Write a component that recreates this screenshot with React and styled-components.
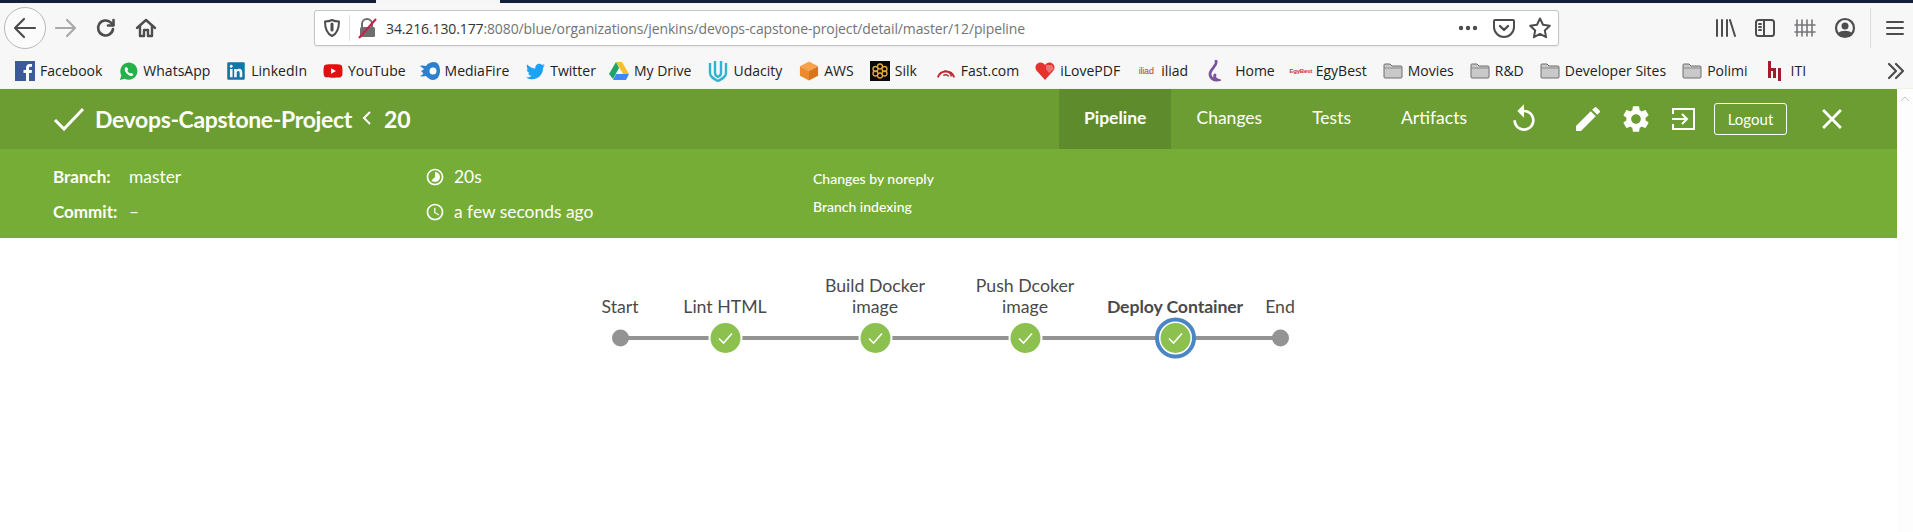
import React from "react";
import styled, { createGlobalStyle } from "styled-components";
import { FaTwitter, FaLinkedin, FaYoutube } from "react-icons/fa";
import { MdReplay, MdEdit, MdSettings, MdClose, MdTimelapse, MdAccessTime } from "react-icons/md";

const GlobalStyle = createGlobalStyle`
  html, body {
    margin: 0;
    padding: 0;
    height: 100%;
    background: #fff;
    overflow: hidden;
  }
  #root {
    height: 100%;
  }
`;

const Window = styled.div`
  width: 1913px;
  height: 532px;
  display: flex;
  flex-direction: column;
  overflow: hidden;
`;

const TabStrip = styled.div`
  height: 3px;
  flex: none;
  display: flex;
  background: #14203a;
`;

const TabGap = styled.div`
  width: 124px;
  margin-left: 376px;
  background: #f5f6f7;
`;

const NavBar = styled.div`
  height: 49px;
  flex: none;
  display: flex;
  align-items: center;
  padding-left: 4px;
  background: #f7f7f8;
  color: #4d4d4f;
`;

const BackButton = styled.div`
  width: 40px;
  height: 40px;
  flex: none;
  display: flex;
  align-items: center;
  justify-content: center;
  border: 1px solid #b9b9bb;
  border-radius: 50%;
  background: #fbfbfb;
`;

const NavButton = styled.div`
  width: ${(p) => p.$w || 40}px;
  height: 36px;
  flex: none;
  box-sizing: border-box;
  padding-left: ${(p) => p.$pl || 0}px;
  display: flex;
  align-items: center;
  justify-content: center;
  color: ${(p) => p.$color || "#4d4d4f"};
`;

const AddressBar = styled.div`
  width: 1245px;
  height: 36px;
  flex: none;
  box-sizing: border-box;
  margin-left: 148px;
  display: flex;
  align-items: center;
  border: 1px solid #c4c4c6;
  border-radius: 3px;
  background: #fff;
  box-shadow: 0 1px 2px rgba(0, 0, 0, 0.06);
`;

const ShieldSlot = styled.div`
  width: 34px;
  height: 26px;
  flex: none;
  display: flex;
  align-items: center;
  justify-content: center;
  border-right: 1px solid #e2e2e3;
`;

const LockSlot = styled.div`
  width: 36px;
  flex: none;
  display: flex;
  align-items: center;
  justify-content: center;
`;

const Url = styled.div`
  flex: 1;
  font: 14px/20px "Open Sans", sans-serif;
  letter-spacing: -0.12px;
  color: #737373;
  white-space: nowrap;
  margin-top: 2px;
  span {
    color: #333;
  }
`;

const RightTools = styled.div`
  margin-left: auto;
  display: flex;
  align-items: center;
`;

const ToolSeparator = styled.div`
  width: 1px;
  height: 40px;
  background: #dcdcde;
  margin-left: 5px;
`;

const BookmarkBar = styled.div`
  height: 36px;
  flex: none;
  box-sizing: border-box;
  padding: 2px 0 0 15px;
  display: flex;
  align-items: center;
  background: #f7f7f8;
  position: relative;
`;

const Bookmark = styled.div`
  display: flex;
  align-items: center;
  gap: ${(p) => p.$gap || 5}px;
  margin-right: ${(p) => p.$mr || 16}px;
  font: 14px/20px "Open Sans", sans-serif;
  color: #222;
  white-space: nowrap;
`;

const IconBox = styled.div`
  width: 20px;
  height: 20px;
  flex: none;
  display: flex;
  align-items: center;
  justify-content: center;
  color: ${(p) => p.$color || "inherit"};
`;

const TinyLogo = styled.span`
  font: ${(p) => p.$weight || 700} ${(p) => p.$size || 6}px/20px "Liberation Sans", sans-serif;
  color: ${(p) => p.$color};
  letter-spacing: -0.2px;
`;

const OverflowButton = styled.div`
  position: absolute;
  right: 6px;
  top: 8px;
  color: #4d4d4f;
  display: flex;
`;

const Page = styled.div`
  flex: 1;
  display: flex;
  min-height: 0;
  border-top: 1px solid #eef3e8;
`;

const Content = styled.div`
  width: 1897px;
  flex: none;
  display: flex;
  flex-direction: column;
  background: #fff;
`;

const Scrollbar = styled.div`
  flex: 1;
  display: flex;
  justify-content: center;
  padding-top: 7px;
  background: #fdfdfd;
`;

const TitleBar = styled.header`
  height: 60px;
  flex: none;
  display: flex;
  align-items: stretch;
  padding-left: 53px;
  background: #6c9d32;
  color: #fff;
  font-family: Lato, sans-serif;
`;

const TitleBlock = styled.div`
  display: flex;
  align-items: center;
`;

const ProjectName = styled.h1`
  margin: 0 0 0 10px;
  font: 700 23px/30px Lato, sans-serif;
  letter-spacing: -0.35px;
`;

const ChevronSlot = styled.span`
  display: flex;
  margin: -3px 12px 0 10px;
`;

const RunId = styled.span`
  font: 700 23px/30px Lato, sans-serif;
`;

const Tabs = styled.nav`
  margin-left: auto;
  display: flex;
`;

const Tab = styled.div`
  display: flex;
  align-items: center;
  padding: 0 25px 3px;
  font: ${(p) => (p.$active ? 700 : 400)} 17.5px/24px Lato, sans-serif;
  background: ${(p) => (p.$active ? "#5e8c2c" : "transparent")};
`;

const Actions = styled.div`
  display: flex;
  align-items: center;
  padding-right: 41px;
`;

const ActionIcon = styled.div`
  width: 48px;
  height: 48px;
  display: flex;
  align-items: center;
  justify-content: center;
  margin-left: ${(p) => p.$ml || 0}px;
`;

const LogoutButton = styled.div`
  width: 71px;
  height: 30px;
  margin-left: 6px;
  display: flex;
  align-items: center;
  justify-content: center;
  border: 1px solid #fff;
  border-radius: 3px;
  font: 400 15px/20px Lato, sans-serif;
`;

const InfoBand = styled.section`
  height: 89px;
  flex: none;
  display: flex;
  padding: 10px 0 0 53px;
  box-sizing: border-box;
  background: #76ad36;
  color: #fff;
  font-family: Lato, sans-serif;
`;

const InfoColumn = styled.div`
  width: ${(p) => p.$w}px;
  flex: none;
`;

const InfoRow = styled.div`
  height: 35px;
  display: flex;
  align-items: center;
  font-size: 17.4px;
  line-height: 22px;
`;

const InfoLabel = styled.span`
  width: 76px;
  font-weight: 700;
  font-size: 17px;
`;

const InfoGlyph = styled.span`
  width: 29px;
  display: flex;
`;

const CauseColumn = styled.div`
  padding-top: 6px;
`;

const CauseRow = styled.div`
  height: 28px;
  display: flex;
  align-items: center;
  font: 500 14px/18px Lato, sans-serif;
`;

const GraphCanvas = styled.div`
  position: relative;
  width: 762px;
  height: 110px;
  margin: 32px auto 0;
`;

const GraphSvg = styled.svg`
  position: absolute;
  left: 0;
  top: 0;
`;

const StageLabel = styled.div`
  position: absolute;
  left: ${(p) => p.$x}px;
  bottom: 63px;
  transform: translateX(-50%);
  text-align: center;
  white-space: pre-line;
  width: 160px;
  font: ${(p) => (p.$selected ? 700 : 400)} 17.7px/21px Lato, sans-serif;
  letter-spacing: ${(p) => (p.$selected ? "-0.1px" : "0")};
  color: #4a4a4a;
`;

const Ff = ({ w = 22, h = 22, vb = "0 0 22 22", sw = 2, children }) => (
  <svg width={w} height={h} viewBox={vb} fill="none" stroke="currentColor" strokeWidth={sw} strokeLinecap="round" strokeLinejoin="round">
    {children}
  </svg>
);

const BackIcon = () => (
  <Ff w={26} h={26} vb="0 0 26 26" sw={2.2}>
    <path d="M23 13H3M12 4l-9 9 9 9" />
  </Ff>
);
const ForwardIcon = () => (
  <Ff w={24} h={24} vb="0 0 24 24" sw={2.2}>
    <path d="M2 12h19M13 4l8 8-8 8" />
  </Ff>
);
const ReloadIcon = () => (
  <Ff sw={2.6}>
    <path d="M18 12a7.500 7.500 0 1 1-2.400-6.600L18 8" />
    <path d="M18.500 3v5.500H13" />
  </Ff>
);
const HomeIcon = () => (
  <Ff sw={2.4}>
    <path d="M2 11 11 3l9 8" />
    <path d="M5 9v10h4v-6h4v6h4V9" />
  </Ff>
);
const ShieldIcon = () => (
  <Ff w={20} h={20} vb="0 0 20 20" sw={2}>
    <path d="M10 2c2 1 4 1.400 7 1.500 0 7-1.500 12-7 14.500C4.500 15.500 3 10.500 3 3.500 6 3.400 8 3 10 2z" />
    <path d="M10 6v6" strokeWidth={3} />
  </Ff>
);
const LockOffIcon = () => (
  <svg width="20" height="22" viewBox="0 0 20 22">
    <path d="M4 10V7a5 5 0 0 1 10 0v3" fill="none" stroke="#6e6e6e" strokeWidth="2" />
    <rect x="2" y="10" width="15" height="10" rx="1.500" fill="#6e6e6e" />
    <path d="M1 21 18 2" stroke="#c5224b" strokeWidth="2.200" />
  </svg>
);
const PocketIcon = () => (
  <Ff w={24} h={24} vb="0 0 24 24">
    <path d="M3 4h18a1 1 0 0 1 1 1v6a10 10 0 0 1-20 0V5a1 1 0 0 1 1-1z" />
    <path d="M8 10l4 4 4-4" strokeWidth={2.4} />
  </Ff>
);
const StarIcon = () => (
  <Ff w={24} h={24} vb="0 0 24 24">
    <path d="M12 2.500l3 6.300 6.800.9-5 4.700 1.300 6.800-6.100-3.300-6.100 3.300 1.300-6.800-5-4.700 6.800-.9z" />
  </Ff>
);
const LibraryIcon = () => (
  <Ff>
    <path d="M3 3v16M8 3v16M13 3v16M16 3l5 16" />
  </Ff>
);
const SidebarIcon = () => (
  <Ff>
    <rect x="2" y="3" width="18" height="16" rx="2.500" />
    <path d="M10 3v16M5 7h2M5 10h2M5 13h2" />
  </Ff>
);
const FenceIcon = () => (
  <Ff sw={1.6}>
    <path d="M3 3v16M8 3v16M13 3v16M18 3v16M1 8h20M1 15h20" stroke="#77777a" />
  </Ff>
);
const AccountIcon = () => (
  <svg width="22" height="22" viewBox="0 0 22 22">
    <circle cx="11" cy="11" r="9" fill="none" stroke="#4d4d4f" strokeWidth="2.200" />
    <circle cx="11" cy="9" r="3.500" fill="#4d4d4f" />
    <path d="M4.500 16c2-3 11-3 13 0l-3 3h-7z" fill="#4d4d4f" />
  </svg>
);
const MenuIcon = () => (
  <Ff>
    <path d="M3 5h16M3 11h16M3 17h16" />
  </Ff>
);
const DotsIcon = () => (
  <svg width="20" height="6" viewBox="0 0 20 6" fill="currentColor">
    <circle cx="3" cy="3" r="2.200" />
    <circle cx="10" cy="3" r="2.200" />
    <circle cx="17" cy="3" r="2.200" />
  </svg>
);

const FacebookIcon = () => (
  <svg width="20" height="20" viewBox="0 0 20 20">
    <rect width="20" height="20" fill="#3b5a9a" />
    <path d="M14 20v-8h2.600l.4-3h-3V7.300c0-1 .3-1.500 1.500-1.500H17V3.100C16.600 3 15.700 3 14.800 3 12.500 3 11 4.300 11 6.900V9H8.500v3H11v8z" fill="#fff" />
  </svg>
);
const WhatsAppIcon = () => (
  <svg width="19" height="19" viewBox="0 0 20 20">
    <path d="M1 19l1.500-5A9 9 0 1 1 6 17.500z" fill="#25b14a" />
    <path d="M7 5.500c-1.500 1-1.500 3.500.7 6.200s5 3.800 6.600 2.800l.7-1.700-2.300-1.600-1.100.8c-1.200-.5-2.300-1.700-2.800-3l.9-1.100L8.400 5.500z" fill="#fff" />
  </svg>
);
const MediaFireIcon = () => (
  <svg width="20" height="18" viewBox="0 0 20 18">
    <path d="M0 4c3-1 4 0 6 0 2-3 5-4 8-4 4 0 6 4 6 9s-3 9-7 9c-3 0-5-2-7-4-2 0-4 1-6 0 2-1 4-2 3-3L1 9c1-1 3-1 3-2z" fill="#2d7fd0" />
    <circle cx="13" cy="9" r="3.500" fill="#fff" />
  </svg>
);
const DriveIcon = () => (
  <svg width="20" height="18" viewBox="0 0 20 18">
    <path d="M7 0h6l7 12h-6z" fill="#f5c02e" />
    <path d="M7 0l3 6-6 11-4-5z" fill="#1fa463" />
    <path d="M4 18l3-6h13l-3 6z" fill="#4285f4" />
  </svg>
);
const UdacityIcon = () => (
  <svg width="20" height="22" viewBox="0 0 20 22" fill="none" stroke="#2fb4d0" strokeWidth="2.400">
    <path d="M2 3v10c0 4 4 6 8 8 4-2 8-4 8-8V3" />
    <path d="M7 1v12c0 2 1 3 3 4 2-1 3-2 3-4V1" />
  </svg>
);
const AwsIcon = () => (
  <svg width="21" height="22" viewBox="0 0 21 22">
    <path d="M10.500 1 20 6 10.500 11 1 6z" fill="#f7a14a" />
    <path d="M1 6l9.500 5v10L1 16z" fill="#ec8a2c" />
    <path d="M20 6l-9.500 5v10L20 16z" fill="#d9761d" />
  </svg>
);
const SilkIcon = () => (
  <svg width="20" height="20" viewBox="0 0 20 20">
    <rect width="20" height="20" fill="#0a0a0a" />
    <g fill="none" stroke="#e2a63a" strokeWidth="1.300">
      <circle cx="10" cy="5.500" r="2.500" />
      <circle cx="10" cy="14.500" r="2.500" />
      <circle cx="5.500" cy="8" r="2.500" />
      <circle cx="14.500" cy="8" r="2.500" />
      <circle cx="5.500" cy="12.500" r="2.500" />
      <circle cx="14.500" cy="12.500" r="2.500" />
    </g>
  </svg>
);
const FastIcon = () => (
  <svg width="22" height="16" viewBox="0 0 22 16" fill="none" stroke="#c8232c" strokeWidth="2">
    <path d="M2 15a9.500 9.500 0 0 1 18 0" />
    <path d="M8 13a4 4 0 0 1 6 1M9 8a8 8 0 0 1 8 6" strokeWidth="1.600" stroke="#a33" />
  </svg>
);
const HeartIcon = () => (
  <svg width="20" height="20" viewBox="0 0 20 20">
    <path d="M10 19 1.500 9.500C-1 6 1.500 1.500 5.500 1.500 7.500 1.500 9 2.500 10 4c1-1.500 2.500-2.500 4.500-2.500 4 0 6.500 4.500 4 8z" fill="#e5322d" />
    <path d="M11 4h6l2 4-5 4-3-4z" fill="#f2f2f2" opacity="0.350" />
  </svg>
);
const HomeSwirlIcon = () => (
  <svg width="14" height="22" viewBox="0 0 14 22" fill="none" stroke="#7a559e" strokeWidth="2.800" strokeLinecap="round">
    <path d="M9 1C11 5 3 9 3 14c0 4 4 7 8 6-3-1-4-3-3-5" />
  </svg>
);
const FolderIcon = () => (
  <svg width="20" height="18" viewBox="0 0 20 18">
    <path d="M1 3a1 1 0 0 1 1-1h5l2 2h9a1 1 0 0 1 1 1v10a1 1 0 0 1-1 1H2a1 1 0 0 1-1-1z" fill="#c9c9c9" stroke="#6f6f6f" />
    <path d="M1 6h18" stroke="#8a8a8a" />
  </svg>
);
const ItiIcon = () => (
  <svg width="14" height="22" viewBox="0 0 14 22" fill="#a11d2b">
    <rect x="1" y="1" width="3" height="17" />
    <rect x="4" y="8" width="4" height="3" />
    <rect x="6" y="8" width="3" height="10" />
    <rect x="11" y="8" width="3" height="13" />
  </svg>
);
const ChevronsIcon = () => (
  <Ff sw={2.2}>
    <path d="M4 4l7 7-7 7M11 4l7 7-7 7" />
  </Ff>
);

const ExitIcon = () => (
  <svg width="26" height="26" viewBox="0 0 26 26" fill="none" stroke="#fff" strokeWidth="2">
    <path d="M2 8V3h21v20H2v-5" />
    <path d="M1 13h15M11 8l5 5-5 5" />
  </svg>
);
const BigCheck = () => (
  <svg width="32" height="24" viewBox="0 0 32 24" fill="none" stroke="#fff" strokeWidth="3">
    <path d="M2 13l9 9L30 2" />
  </svg>
);
const SmallChevron = () => (
  <svg width="10" height="16" viewBox="0 0 10 16" fill="none" stroke="#fff" strokeWidth="2">
    <path d="M8 2 2 8l6 6" />
  </svg>
);
const UpArrow = () => (
  <svg width="10" height="6" viewBox="0 0 10 6" fill="none" stroke="#c4c4c4" strokeWidth="1">
    <path d="M1 5l4-4 4 4" />
  </svg>
);

const bookmarks = [
  { name: "Facebook", icon: <FacebookIcon /> },
  { name: "WhatsApp", icon: <WhatsAppIcon /> },
  { name: "LinkedIn", icon: <FaLinkedin size={20} />, color: "#0f76a8" },
  { name: "YouTube", icon: <FaYoutube size={20} />, color: "#e01010", mr: 14 },
  { name: "MediaFire", icon: <MediaFireIcon /> },
  { name: "Twitter", icon: <FaTwitter size={19} />, color: "#1da1f2", mr: 13 },
  { name: "My Drive", icon: <DriveIcon />, mr: 17 },
  { name: "Udacity", icon: <UdacityIcon />, mr: 17 },
  { name: "AWS", icon: <AwsIcon /> },
  { name: "Silk", icon: <SilkIcon />, mr: 19 },
  { name: "Fast.com", icon: <FastIcon /> },
  { name: "iLovePDF", icon: <HeartIcon /> },
  { name: "iliad", icon: <TinyLogo $color="#c0392b" $size={9} $weight={400}>iliad</TinyLogo> },
  { name: "Home", icon: <HomeSwirlIcon />, gap: 11 },
  { name: "EgyBest", icon: <TinyLogo $color="#d03030">EgyBest</TinyLogo> },
  { name: "Movies", icon: <FolderIcon /> },
  { name: "R&D", icon: <FolderIcon /> },
  { name: "Developer Sites", icon: <FolderIcon /> },
  { name: "Polimi", icon: <FolderIcon /> },
  { name: "ITI", icon: <ItiIcon />, gap: 7 },
];

const stages = [
  { name: "Start", x: 52.5, kind: "plain" },
  { name: "Lint HTML", x: 157.5, kind: "done" },
  { name: "Build Docker\nimage", x: 307.5, kind: "done" },
  { name: "Push Dcoker\nimage", x: 457.5, kind: "done" },
  { name: "Deploy Container", x: 607.5, kind: "done", selected: true },
  { name: "End", x: 712.5, kind: "plain" },
];

const NODE_Y = 68;

const StageNode = ({ stage }) => {
  if (stage.kind === "plain") {
    return <circle cx={stage.x} cy={NODE_Y} r="8.500" fill="#949393" />;
  }
  return (
    <g transform={`translate(${stage.x} ${NODE_Y})`}>
      {stage.selected ? (
        <circle r="18.500" fill="#fff" stroke="#4a86c5" strokeWidth="4" />
      ) : (
        <circle r="17" fill="#fff" />
      )}
      <circle r="15" fill="#8cc04f" />
      <path d="M-6.500 0.500-2 5 6.500-4.500" fill="none" stroke="#fff" strokeWidth="1.600" />
    </g>
  );
};

const PipelineGraph = () => (
  <GraphCanvas>
    <GraphSvg width="762" height="110">
      <line x1={stages[0].x} x2={stages[5].x} y1={NODE_Y} y2={NODE_Y} stroke="#949393" strokeWidth="4" />
      {stages.map((s) => (
        <StageNode key={s.name} stage={s} />
      ))}
    </GraphSvg>
    {stages.map((s) => (
      <StageLabel key={s.name} $x={s.x} $selected={s.selected}>
        {s.name}
      </StageLabel>
    ))}
  </GraphCanvas>
);

const App = () => (
  <Window>
    <GlobalStyle />
    <TabStrip>
      <TabGap />
    </TabStrip>
    <NavBar>
      <BackButton>
        <BackIcon />
      </BackButton>
      <NavButton $color="#a9a9ab">
        <ForwardIcon />
      </NavButton>
      <NavButton>
        <ReloadIcon />
      </NavButton>
      <NavButton>
        <HomeIcon />
      </NavButton>
      <AddressBar>
        <ShieldSlot>
          <ShieldIcon />
        </ShieldSlot>
        <LockSlot>
          <LockOffIcon />
        </LockSlot>
        <Url>
          <span>34.216.130.177</span>:8080/blue/organizations/jenkins/devops-capstone-project/detail/master/12/pipeline
        </Url>
        <NavButton $w={36}>
          <DotsIcon />
        </NavButton>
        <NavButton $w={36}>
          <PocketIcon />
        </NavButton>
        <NavButton $w={36}>
          <StarIcon />
        </NavButton>
      </AddressBar>
      <RightTools>
        <NavButton>
          <LibraryIcon />
        </NavButton>
        <NavButton>
          <SidebarIcon />
        </NavButton>
        <NavButton>
          <FenceIcon />
        </NavButton>
        <NavButton>
          <AccountIcon />
        </NavButton>
        <ToolSeparator />
        <NavButton $w={42} $pl={6}>
          <MenuIcon />
        </NavButton>
      </RightTools>
    </NavBar>
    <BookmarkBar>
      {bookmarks.map((b) => (
        <Bookmark key={b.name} $gap={b.gap} $mr={b.mr}>
          <IconBox $color={b.color}>{b.icon}</IconBox>
          {b.name}
        </Bookmark>
      ))}
      <OverflowButton>
        <ChevronsIcon />
      </OverflowButton>
    </BookmarkBar>
    <Page>
      <Content>
        <TitleBar>
          <TitleBlock>
            <BigCheck />
            <ProjectName>Devops-Capstone-Project</ProjectName>
            <ChevronSlot>
              <SmallChevron />
            </ChevronSlot>
            <RunId>20</RunId>
          </TitleBlock>
          <Tabs>
            <Tab $active>Pipeline</Tab>
            <Tab>Changes</Tab>
            <Tab>Tests</Tab>
            <Tab>Artifacts</Tab>
          </Tabs>
          <Actions>
            <ActionIcon $ml={8}>
              <MdReplay size={32} />
            </ActionIcon>
            <ActionIcon $ml={16}>
              <MdEdit size={32} />
            </ActionIcon>
            <ActionIcon>
              <MdSettings size={32} />
            </ActionIcon>
            <ActionIcon>
              <ExitIcon />
            </ActionIcon>
            <LogoutButton>Logout</LogoutButton>
            <ActionIcon $ml={21}>
              <MdClose size={34} />
            </ActionIcon>
          </Actions>
        </TitleBar>
        <InfoBand>
          <InfoColumn $w={372}>
            <InfoRow>
              <InfoLabel>Branch:</InfoLabel>master
            </InfoRow>
            <InfoRow>
              <InfoLabel>Commit:</InfoLabel>–
            </InfoRow>
          </InfoColumn>
          <InfoColumn $w={388}>
            <InfoRow>
              <InfoGlyph>
                <MdTimelapse size={20} />
              </InfoGlyph>
              20s
            </InfoRow>
            <InfoRow>
              <InfoGlyph>
                <MdAccessTime size={20} />
              </InfoGlyph>
              a few seconds ago
            </InfoRow>
          </InfoColumn>
          <CauseColumn>
            <CauseRow>Changes by noreply</CauseRow>
            <CauseRow>Branch indexing</CauseRow>
          </CauseColumn>
        </InfoBand>
        <PipelineGraph />
      </Content>
      <Scrollbar>
        <UpArrow />
      </Scrollbar>
    </Page>
  </Window>
);

export default App;
